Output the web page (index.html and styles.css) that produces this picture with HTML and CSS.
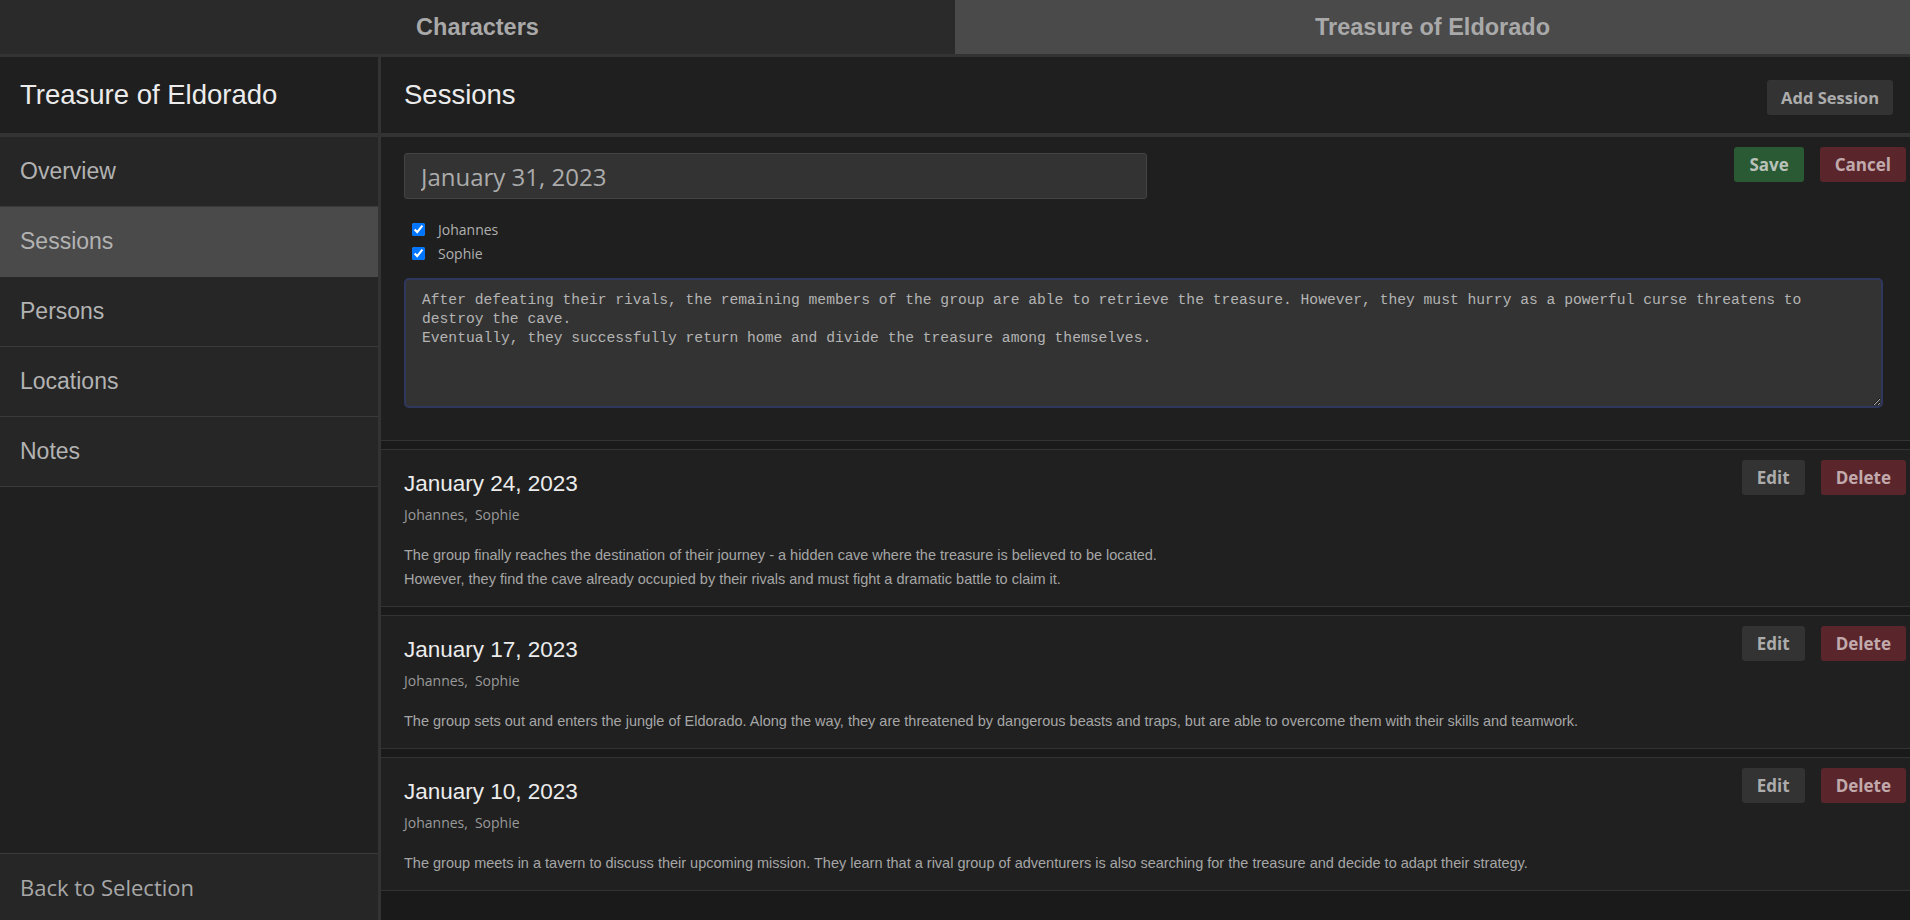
FILE: index.html
```html
<!DOCTYPE html>
<html lang="en">
<head>
<meta charset="utf-8">
<title>Treasure of Eldorado - Sessions</title>
<link rel="stylesheet" href="styles.css">
</head>
<body>
<div class="tabs">
  <div class="tab">Characters</div>
  <div class="tab active">Treasure of Eldorado</div>
</div>
<div class="layout">
  <aside class="sidebar">
    <div class="side-title">Treasure of Eldorado</div>
    <nav class="nav">
      <div class="nav-item">Overview</div>
      <div class="nav-item active">Sessions</div>
      <div class="nav-item">Persons</div>
      <div class="nav-item">Locations</div>
      <div class="nav-item">Notes</div>
    </nav>
    <div class="side-spacer"></div>
    <div class="back">Back to Selection</div>
  </aside>
  <main class="main">
    <div class="main-header">
      <h1 class="main-title">Sessions</h1>
      <button class="btn btn-grey btn-add">Add Session</button>
    </div>
    <div class="list">
      <section class="edit">
        <div class="edit-top">
          <input class="date-input" type="text" value="January 31, 2023">
          <div class="actions">
            <button class="btn btn-green">Save</button>
            <button class="btn btn-red">Cancel</button>
          </div>
        </div>
        <div class="checks">
          <label class="check"><input type="checkbox" checked><span>Johannes</span></label>
          <label class="check"><input type="checkbox" checked><span>Sophie</span></label>
        </div>
        <textarea class="notes" wrap="off">After defeating their rivals, the remaining members of the group are able to retrieve the treasure. However, they must hurry as a powerful curse threatens to
destroy the cave.
Eventually, they successfully return home and divide the treasure among themselves.</textarea>
      </section>

      <section class="card">
        <div class="card-body">
          <h2 class="card-title">January 24, 2023</h2>
          <div class="names"><span>Johannes,</span><span>Sophie</span></div>
          <p class="desc">The group finally reaches the destination of their journey - a hidden cave where the treasure is believed to be located.<br>However, they find the cave already occupied by their rivals and must fight a dramatic battle to claim it.</p>
        </div>
        <div class="actions">
          <button class="btn btn-grey">Edit</button>
          <button class="btn btn-red">Delete</button>
        </div>
      </section>

      <section class="card">
        <div class="card-body">
          <h2 class="card-title">January 17, 2023</h2>
          <div class="names"><span>Johannes,</span><span>Sophie</span></div>
          <p class="desc">The group sets out and enters the jungle of Eldorado. Along the way, they are threatened by dangerous beasts and traps, but are able to overcome them with their skills and teamwork.</p>
        </div>
        <div class="actions">
          <button class="btn btn-grey">Edit</button>
          <button class="btn btn-red">Delete</button>
        </div>
      </section>

      <section class="card">
        <div class="card-body">
          <h2 class="card-title">January 10, 2023</h2>
          <div class="names"><span>Johannes,</span><span>Sophie</span></div>
          <p class="desc">The group meets in a tavern to discuss their upcoming mission. They learn that a rival group of adventurers is also searching for the treasure and decide to adapt their strategy.</p>
        </div>
        <div class="actions">
          <button class="btn btn-grey">Edit</button>
          <button class="btn btn-red">Delete</button>
        </div>
      </section>
    </div>
  </main>
</div>
</body>
</html>
```
FILE: styles.css
```css
* { box-sizing: border-box; }
html, body { margin: 0; padding: 0; }
body {
  width: 1910px;
  height: 920px;
  overflow: hidden;
  background: #1a1a1a;
  font-family: "Liberation Sans", Arial, sans-serif;
  color: #b4b4b4;
}

.tabs {
  display: flex;
  height: 57px;
  border-bottom: 3px solid #333333;
}
.tab {
  flex: 1 1 0;
  display: flex;
  align-items: center;
  justify-content: center;
  background: #2a2a2a;
  color: #a9a9a9;
  font-weight: 700;
  font-size: 23.5px;
}
.tab.active { background: #4a4a4a; }

.layout {
  display: flex;
  height: 863px;
}

.sidebar {
  width: 381px;
  flex: 0 0 381px;
  border-right: 3px solid #333333;
  background: #202020;
  display: flex;
  flex-direction: column;
}
.side-title {
  height: 80px;
  flex: 0 0 80px;
  border-bottom: 4px solid #333333;
  display: flex;
  align-items: center;
  padding-left: 20px;
  font-size: 27.5px;
  color: #ececec;
  background: #1f1f1f;
}
.nav { display: flex; flex-direction: column; }
.nav-item {
  height: 70px;
  display: flex;
  align-items: center;
  padding-left: 20px;
  font-size: 23px;
  color: #b2b2b2;
  background: #262626;
  border-bottom: 1px solid #3a3a3a;
}
.nav-item.active { background: #4a4a4a; border-bottom-color: #4a4a4a; }
.side-spacer { flex: 1 1 auto; }
.back {
  height: 67px;
  border-top: 1px solid #3a3a3a;
  background: #262626;
  display: flex;
  align-items: center;
  padding-left: 20px;
  font-family: "Open Sans", sans-serif;
  font-size: 22px;
  color: #a8a8a8;
}

.main {
  flex: 1 1 auto;
  display: flex;
  flex-direction: column;
  min-width: 0;
}
.main-header {
  height: 80px;
  flex: 0 0 80px;
  border-bottom: 4px solid #333333;
  background: #1f1f1f;
  display: flex;
  align-items: center;
  justify-content: space-between;
  padding: 0 17px 0 23px;
}
.main-title {
  margin: 0;
  font-size: 27.5px;
  font-weight: 400;
  color: #ececec;
}

.btn {
  height: 35px;
  padding: 0 15px;
  border: none;
  border-radius: 3px;
  font-family: "Open Sans", sans-serif;
  font-weight: 700;
  font-size: 17px;
  color: #b5b5b5;
  cursor: pointer;
}
.btn-add { margin-top: 4px; padding: 0 14px; font-size: 16.5px; }
.btn-grey { background: #333333; color: #acacac; }
.btn-green { background: #2a5a33; color: #b9c1b9; }
.btn-red { background: #5a262c; color: #c2aaac; }

.actions {
  display: flex;
  gap: 16px;
  flex: 0 0 auto;
}

.list {
  display: flex;
  flex-direction: column;
  gap: 8px;
}

.edit {
  background: #1f1f1f;
  border-bottom: 1px solid #333333;
  padding: 10px 4px 32px 23px;
}
.edit-top {
  display: flex;
  justify-content: space-between;
  align-items: flex-start;
}
.date-input {
  margin-top: 6px;
  width: 743px;
  height: 46px;
  background: #333333;
  border: 1px solid #444444;
  border-radius: 3px;
  padding: 0 16px;
  font-family: "Open Sans", sans-serif;
  font-size: 24px;
  color: #ababab;
  outline: none;
}
.checks {
  margin-top: 18px;
  padding-left: 4px;
  display: flex;
  flex-direction: column;
}
.check {
  height: 24px;
  display: flex;
  align-items: center;
  font-family: "Open Sans", sans-serif;
  font-size: 14px;
  color: #b0b0b0;
}
.check input { margin: 0 0 0 4px; width: 13px; height: 13px; }
.check span { margin-left: 13px; }
.notes {
  display: block;
  margin-top: 13px;
  width: calc(100% - 23px);
  height: 130px;
  background: #333333;
  border: 2px solid #2f375f;
  border-radius: 5px;
  padding: 11px 16px;
  font-family: "Liberation Mono", monospace;
  font-size: 14.65px;
  line-height: 19px;
  color: #b4b4b4;
  overflow: hidden;
  outline: none;
}

.card {
  display: flex;
  justify-content: space-between;
  align-items: flex-start;
  background: #202020;
  border-top: 1px solid #333333;
  border-bottom: 1px solid #333333;
  padding: 10px 4px 15px 23px;
}
.card-body { padding-top: 10px; }
.card-title {
  margin: 0;
  font-size: 22.5px;
  line-height: 27px;
  font-weight: 400;
  color: #ececec;
}
.names {
  margin-top: 7px;
  height: 20px;
  display: flex;
  gap: 7px;
  align-items: center;
  font-family: "Open Sans", sans-serif;
  font-size: 14px;
  color: #9a9a9a;
}
.desc {
  margin: 19px 0 0 0;
  font-size: 14.5px;
  line-height: 24px;
  color: #a6a6a6;
}
```
